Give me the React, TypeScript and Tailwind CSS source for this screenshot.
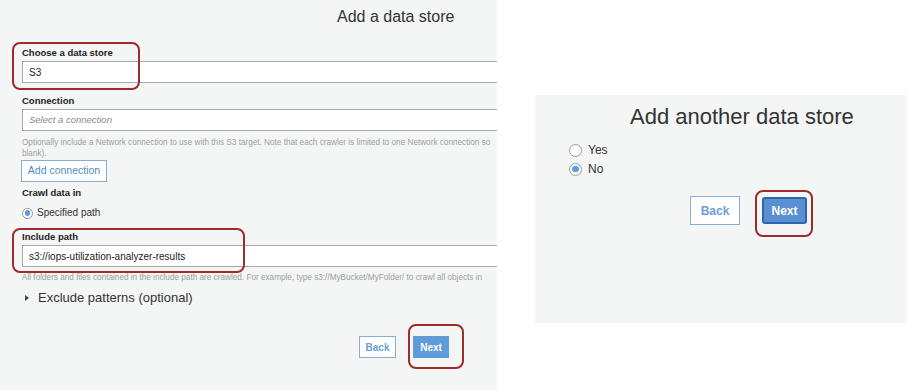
import React from "react";

const FONT = { fontFamily: '"Liberation Sans", Arial, Helvetica, sans-serif' };

function Highlight({ className }: { className: string }) {
  return (
    <div
      aria-hidden="true"
      className={`pointer-events-none absolute rounded-[8px] border-2 border-[#9f2b2c] ${className}`}
    />
  );
}

function Radio({ checked, size }: { checked: boolean; size: string }) {
  return (
    <span
      className={`flex shrink-0 items-center justify-center rounded-full border border-[#9a9a9a] bg-white ${size}`}
    >
      {checked ? (
        <span className="h-[62%] w-[62%] rounded-full bg-[#5b9be0]" />
      ) : null}
    </span>
  );
}

function Label({ children }: { children: React.ReactNode }) {
  return (
    <div className="text-[9.5px] font-bold leading-[12px] text-[#222]">
      {children}
    </div>
  );
}

function Field({
  value,
  placeholder,
}: {
  value?: string;
  placeholder?: string;
}) {
  return (
    <div className="mt-[2px] flex h-[22px] items-center border border-r-0 border-[#a7a9aa] bg-white pl-[6px]">
      {value ? (
        <span className="text-[10px] text-[#222]">{value}</span>
      ) : (
        <span className="text-[9.5px] italic text-[#8a8a8a]">{placeholder}</span>
      )}
    </div>
  );
}

function AddDataStore() {
  return (
    <div className="relative h-[390px] w-[497px] shrink-0 overflow-hidden bg-[#f4f5f5] pl-[22px]">
      <div className="pl-[315px] pt-[7px] text-[16px] leading-[20px] text-[#333]">
        Add a data store
      </div>

      <div className="relative mt-[20px]">
        <Label>Choose a data store</Label>
        <div className="mt-[1px]">
          <Field value="S3" />
        </div>
        <Highlight className="left-[-10px] top-[-5px] h-[48px] w-[128px]" />
      </div>

      <div className="mt-[12px]">
        <Label>Connection</Label>
        <Field placeholder="Select a connection" />
      </div>

      <div className="mt-[6px] whitespace-nowrap text-[8.2px] leading-[11px] text-[#a0a0a0]">
        <div>
          Optionally include a Network connection to use with this S3 target. Note that each crawler is limited to one Network connection so
        </div>
        <div>blank).</div>
      </div>

      <button className="ml-[-1px] mt-[1px] flex h-[22px] w-[86px] items-center justify-center border border-[#86aedb] bg-white text-[10.5px] text-[#4f8cc9]">
        Add connection
      </button>

      <div className="mt-[5px]">
        <Label>Crawl data in</Label>
      </div>

      <div className="mt-[8px] flex h-[12px] items-center gap-[4px]">
        <Radio checked size="h-[11px] w-[11px]" />
        <span className="text-[10px] leading-[12px] text-[#333]">Specified path</span>
      </div>

      <div className="relative mt-[12px]">
        <Label>Include path</Label>
        <Field value="s3://iops-utilization-analyzer-results" />
        <Highlight className="left-[-10px] top-[-3px] h-[45px] w-[233px]" />
      </div>

      <div className="mt-[5px] whitespace-nowrap text-[8.2px] leading-[11px] text-[#a0a0a0]">
        All folders and files contained in the include path are crawled. For example, type s3://MyBucket/MyFolder/ to crawl all objects in
      </div>

      <div className="mt-[7px] flex h-[16px] items-center gap-[9px] pl-[3px]">
        <svg width="4" height="6" viewBox="0 0 4 6" className="shrink-0">
          <path d="M0 0 L4 3 L0 6 Z" fill="#444" />
        </svg>
        <span className="text-[13px] leading-[16px] text-[#333]">
          Exclude patterns (optional)
        </span>
      </div>

      <div className="ml-[337px] mt-[30px] flex gap-[17px]">
        <button className="flex h-[22px] w-[37px] items-center justify-center border border-[#86aedb] bg-white text-[10px] font-bold text-[#6d9fd6]">
          Back
        </button>
        <div className="relative">
          <button className="flex h-[22px] w-[36px] items-center justify-center bg-[#5f9bd7] text-[10px] font-bold text-white">
            Next
          </button>
          <Highlight className="left-[-5px] top-[-12px] h-[45px] w-[56px]" />
        </div>
      </div>
    </div>
  );
}

function AddAnotherDataStore() {
  return (
    <div className="mt-[95px] h-[228px] w-[372px] shrink-0 bg-[#f4f5f5]">
      <div className="pl-[95px] pt-[9px] text-[22px] leading-[26px] text-[#333]">
        Add another data store
      </div>

      <div className="ml-[34px] mt-[13px] flex flex-col gap-[5px]">
        <div className="flex h-[14px] items-center gap-[6px]">
          <Radio checked={false} size="h-[13px] w-[13px]" />
          <span className="text-[12px] leading-[14px] text-[#333]">Yes</span>
        </div>
        <div className="flex h-[14px] items-center gap-[6px]">
          <Radio checked size="h-[13px] w-[13px]" />
          <span className="text-[12px] leading-[14px] text-[#333]">No</span>
        </div>
      </div>

      <div className="ml-[155px] mt-[20px] flex items-center gap-[22px]">
        <button className="flex h-[29px] w-[50px] items-center justify-center border border-[#86aedb] bg-white text-[12px] font-bold text-[#6d9fd6]">
          Back
        </button>
        <div className="relative">
          <button className="flex h-[27px] w-[45px] items-center justify-center rounded-[3px] border-2 border-[#2f65b0] bg-[#5a8fd2] text-[12px] font-bold text-white">
            Next
          </button>
          <Highlight className="left-[-7px] top-[-7px] h-[47px] w-[58px]" />
        </div>
      </div>
    </div>
  );
}

export default function App() {
  return (
    <div style={FONT} className="flex h-[390px] w-[907px] gap-[38px] overflow-hidden bg-white">
      <AddDataStore />
      <AddAnotherDataStore />
    </div>
  );
}
